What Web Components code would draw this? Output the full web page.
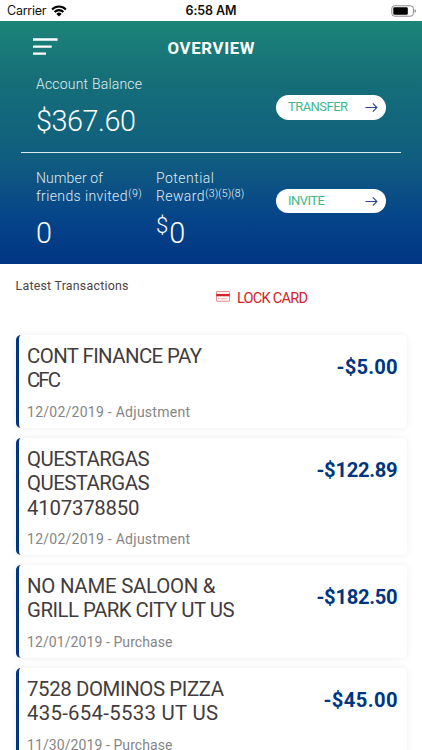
<!DOCTYPE html>
<html lang="en"><head><meta charset="utf-8"><title>Overview</title>
<style>
html,body{margin:0;height:750px;overflow:hidden;background:#fff}
body{font-family:Roboto,"Liberation Sans",sans-serif;color:#433c3c}
</style></head><body>
<overview-app></overview-app>
<script>
const define=(name,html,after)=>customElements.define(name,class extends HTMLElement{
  connectedCallback(){
    if(this.shadowRoot)return;
    const root=this.attachShadow({mode:"open"});
    const t=document.createElement("template");
    t.innerHTML=typeof html==="function"?html(this):html;
    root.append(t.content.cloneNode(true));
    if(after)after(this,root);
  }
});

/* One line of text tracked to an exact advance width. */
define("fit-text",`<style>
:host{display:block;white-space:nowrap}
span{display:inline-block}
</style><span></span>`,(el,root)=>{
  const s=root.querySelector("span"),w=+el.getAttribute("w"),txt=el.getAttribute("text");
  s.textContent=txt;
  el.style.width=w+"px";
  const n=s.getBoundingClientRect().width;
  if(txt.length>1)s.style.letterSpacing=((w-n)/(txt.length-1)).toFixed(3)+"px";
});

define("status-bar",`<style>
:host{display:grid;grid-template-columns:1fr auto 1fr;align-items:center;height:20.5px;padding:1px 5px 0;box-sizing:border-box;background:#fff;color:#111;font:400 12.5px/19px Inter,sans-serif}
.l{display:flex;gap:4.5px;align-items:center;margin-left:2px}
.r{display:flex;justify-content:flex-end}
.t{font-weight:600}
svg{display:block}
</style>
<div class="l"><fit-text w="39.5" text="Carrier"></fit-text>
<svg width="16" height="12" viewBox="0 0 16 12"><g fill="none" stroke="#000" stroke-width="2.1"><path d="M1.1 4.4a9.8 9.8 0 0 1 13.8 0"/><path d="M3.6 7a6.2 6.2 0 0 1 8.8 0"/></g><path d="M5.4 8.9a3.7 3.7 0 0 1 5.2 0L8 11.5z"/></svg></div>
<fit-text class="t" w="51" text="6:58 AM"></fit-text>
<div class="r"><svg width="26" height="12" viewBox="0 0 26 12"><rect x=".8" y=".8" width="21.6" height="10.4" rx="2.8" fill="none" stroke="#888"/><rect x="2.3" y="2.3" width="14.5" height="7.4" rx="1.2" fill="#000"/><path d="M23.6 4.2q1.5.5 1.5 1.8t-1.5 1.8z" fill="#888"/></svg></div>`);

define("pill-button",el=>`<style>
:host{display:flex;align-items:center;justify-content:space-between;width:110px;height:24.5px;box-sizing:border-box;padding:0 8.5px 0 12px;border-radius:13px;background:#fff;color:#43b78a;font-size:13px;font-weight:400;line-height:24px}
</style><fit-text w="${el.getAttribute("w")}" text="${el.getAttribute("label")}"></fit-text>
<svg width="13" height="12" viewBox="0 0 13 12" fill="none" stroke="#24468f" stroke-width="1.1"><path d="M.5 6.5h11.3M7.8 2.4l4.1 4.1-4.1 4.1"/></svg>`);

define("overview-header",`<style>
:host{display:flex;flex-direction:column;height:243.5px;box-sizing:border-box;background:linear-gradient(#1c8578,#167078 22%,#105d7f 57%,#064489 81%,#003584);color:#eef8fb;font-weight:300}
.top{display:grid;grid-template-columns:1fr auto 1fr;height:54px;padding:0 33px}
.top svg{margin-top:17px}
.top fit-text{font-weight:700;font-size:16.8px;line-height:20px;margin-top:17.5px;color:#fff}
.bal{display:flex;justify-content:space-between;height:77.5px;padding:0 36px;box-sizing:border-box}
.bal pill-button{margin-top:20.5px}
.lab{font-size:14px;line-height:18.5px;opacity:.93}
.num{font-size:28.8px;line-height:34px;color:#fff}
.bal .num{margin-top:11px}
.rule{height:1.3px;margin:0 21px;background:#dcebf0}
.stats{display:grid;grid-template-columns:120px 120px 110px;padding:15.5px 36px 0}
.stats pill-button{margin-top:20px}
.row{display:flex}
.sup{font-size:10.5px;line-height:10px;margin-top:1.5px;margin-left:.7px}
.stats .num{margin-top:10px;display:flex}
.cur{font-size:22px;line-height:24px;margin-top:-2px;margin-right:1px}
</style>
<div class="top"><svg width="26" height="18" viewBox="0 0 26 18" fill="#fff"><path d="M0 .3h24.6v2.4H0zM0 7.5h18.7v2.3H0zM0 14.5h13v2.3H0z"/></svg><fit-text w="87" text="OVERVIEW"></fit-text></div>
<div class="bal"><div><fit-text class="lab" w="106" text="Account Balance"></fit-text><fit-text class="num" w="100" text="$367.60"></fit-text></div><pill-button label="TRANSFER" w="60"></pill-button></div>
<div class="rule"></div>
<div class="stats">
<div><fit-text class="lab" w="67" text="Number of"></fit-text><div class="row"><fit-text class="lab" w="91.5" text="friends invited"></fit-text><fit-text class="sup" w="13.5" text="(9)"></fit-text></div><div class="num">0</div></div>
<div><fit-text class="lab" w="58" text="Potential"></fit-text><div class="row"><fit-text class="lab" w="48.5" text="Reward"></fit-text><fit-text class="sup" w="39" text="(3)(5)(8)"></fit-text></div><div class="num"><span class="cur">$</span><span>0</span></div></div>
<pill-button label="INVITE" w="37"></pill-button>
</div>`);

define("section-bar",`<style>
:host{display:flex;height:71.2px;box-sizing:border-box;padding-left:15.5px}
.h{font-size:12.4px;line-height:16px;margin-top:13.5px;color:#4b4545}
.lock{display:flex;margin-left:87.5px;margin-top:24px;gap:7px;color:#d2232a;font-size:14.6px;line-height:20px;height:20px}
svg{margin-top:3px}
</style><fit-text class="h" w="113" text="Latest Transactions"></fit-text>
<div class="lock"><svg width="14" height="11" viewBox="0 0 14 11"><rect x=".4" y=".6" width="13.2" height="9.6" rx=".6" fill="#fff" stroke="#df6468" stroke-width=".8"/><path d="M.3 2.9h13.4v2.4H.3z" fill="#d2232a"/><path d="M2 7.7h1.5M4.5 7.7h6.8" stroke="#e58a8d" stroke-width=".8"/></svg><fit-text w="71" text="LOCK CARD"></fit-text></div>`);

define("transaction-card",el=>{
  const titles=JSON.parse(el.getAttribute("titles"));
  return `<style>
:host{display:flex;justify-content:space-between;box-sizing:border-box;padding:8.6px 9.5px 7.3px 8.5px;border-left:3px solid #00357f;border-radius:5px;background:#fff;box-shadow:0 0 7px rgba(0,0,0,.07)}
.t{font-size:20.4px;line-height:24.5px}
.d{font-size:14px;line-height:18px;margin-top:10.1px;color:#858585}
.a{font-size:20.2px;line-height:24px;font-weight:700;color:#00357f;margin-top:11.5px}
</style><div>${titles.map(([s,w])=>`<fit-text class="t" w="${w}" text="${s.replace("&","&amp;")}"></fit-text>`).join("")}
<fit-text class="d" w="${el.getAttribute("dw")}" text="${el.getAttribute("date")}"></fit-text></div>
<fit-text class="a" w="${el.getAttribute("aw")}" text="${el.getAttribute("amount")}"></fit-text>`;
});

define("overview-app",`<style>
:host{display:block;width:422px;height:750px;overflow:hidden;background:#fff}
.list{display:flex;flex-direction:column;gap:9.8px;padding:0 15px 0 15.5px}
</style><status-bar></status-bar><overview-header></overview-header><section-bar></section-bar>
<div class="list">
<transaction-card titles='[["CONT FINANCE PAY",175],["CFC",34]]' date="12/02/2019 - Adjustment" dw="163" amount="-$5.00" aw="61"></transaction-card>
<transaction-card titles='[["QUESTARGAS",122.5],["QUESTARGAS",122.5],["4107378850",112.5]]' date="12/02/2019 - Adjustment" dw="163" amount="-$122.89" aw="81"></transaction-card>
<transaction-card titles='[["NO NAME SALOON &",188.5],["GRILL PARK CITY UT US",207.5]]' date="12/01/2019 - Purchase" dw="145.5" amount="-$182.50" aw="81"></transaction-card>
<transaction-card titles='[["7528 DOMINOS PIZZA",197],["435-654-5533 UT US",191]]' date="11/30/2019 - Purchase" dw="145.5" amount="-$45.00" aw="74"></transaction-card>
</div>`);
</script>
</body></html>
